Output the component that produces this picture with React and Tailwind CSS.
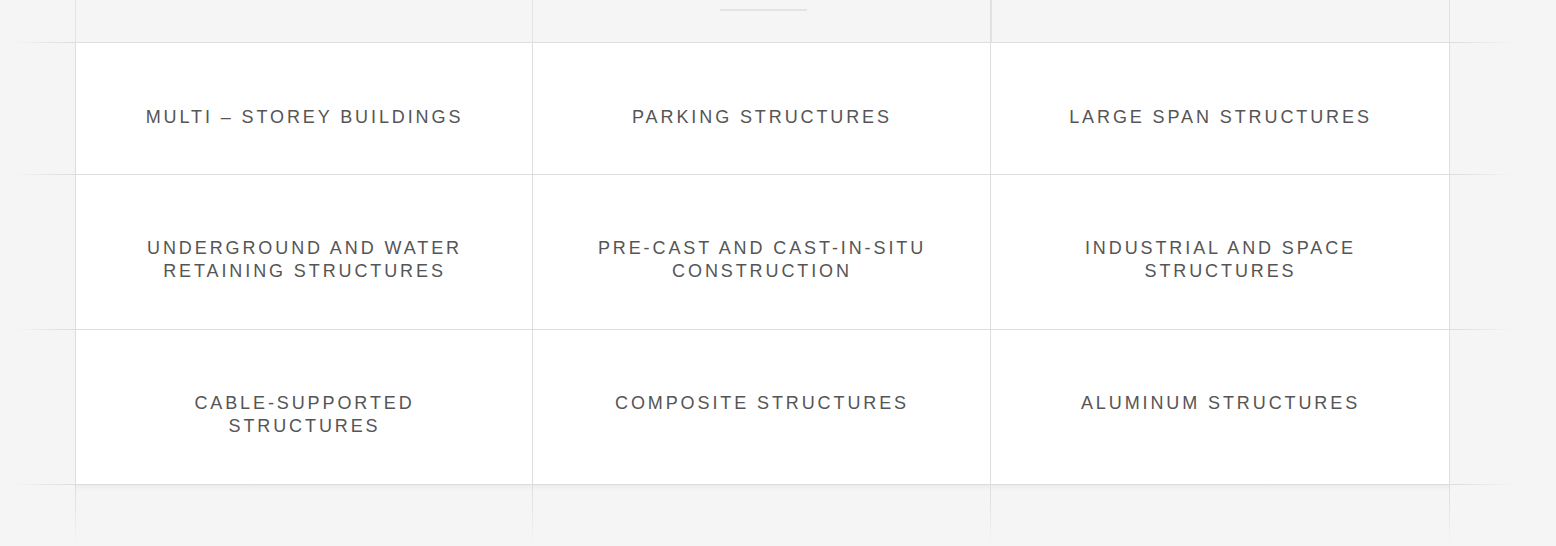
import React from "react";

const rows = [
  [["MULTI – STOREY BUILDINGS"], ["PARKING STRUCTURES"], ["LARGE SPAN STRUCTURES"]],
  [
    ["UNDERGROUND AND WATER", "RETAINING STRUCTURES"],
    ["PRE-CAST AND CAST-IN-SITU", "CONSTRUCTION"],
    ["INDUSTRIAL AND SPACE", "STRUCTURES"],
  ],
  [["CABLE-SUPPORTED", "STRUCTURES"], ["COMPOSITE STRUCTURES"], ["ALUMINUM STRUCTURES"]],
];

const widths = ["w-[457px]", "w-[458px]", "w-[459px]"];

function Cell({ lines, w, first }) {
  return (
    <div
      className={`${w} shrink-0 border-l border-t border-[#dedede] bg-white ${first ? "pt-[63px] pb-[45px]" : "pt-[62px] pb-[46px]"} text-center text-[18px] leading-[23px] tracking-[2.9px] text-[#555555]`}
      style={{ fontFamily: '"Liberation Sans", Arial, sans-serif' }}
    >
      {lines.map((l, i) => (
        <div key={i} className="pl-[1px]">{l}</div>
      ))}
    </div>
  );
}

export default function App() {
  return (
    <div className="w-full h-[546px] overflow-hidden bg-[#f5f5f5] flex flex-col">
      {/* top strip */}
      <div className="flex h-[42px] shrink-0">
        <div className="w-[75px] shrink-0" />
        <div className="w-[457px] shrink-0 border-l border-[#e2e2e2]" />
        <div className="w-[458px] shrink-0 border-l border-[#e2e2e2] flex justify-center pt-[9px]">
          <div className="ml-[3px] w-[87px] h-[2px] bg-[#e4e4e4]" />
        </div>
        <div className="w-[459px] shrink-0 border-l-2 border-[#e2e2e2]" />
        <div className="flex-1 border-l border-[#e2e2e2]" />
      </div>

      {rows.map((row, ri) => (
        <div key={ri} className="flex shrink-0">
          <div className="w-[75px] shrink-0 pl-3">
            <div className="h-px bg-linear-to-r from-transparent to-[#dcdcdc]" />
          </div>
          {row.map((lines, ci) => (
            <Cell key={ci} lines={lines} w={widths[ci]} first={ri === 0} />
          ))}
          <div className="flex-1 border-l border-[#dedede]">
            <div className="h-px w-[64px] bg-linear-to-r from-[#dcdcdc] to-transparent" />
          </div>
        </div>
      ))}

      {/* bottom strip */}
      <div className="flex flex-1">
        <div className="w-[75px] shrink-0 pl-3">
          <div className="h-px bg-linear-to-r from-transparent to-[#dcdcdc]" />
        </div>
        {widths.map((w, i) => (
          <div key={i} className={`${w} shrink-0 flex border-t border-[#dcdcdc]`}>
            <div className="w-px h-full bg-linear-to-b from-[#dcdcdc] to-transparent" />
            <div className="flex-1">
              <div className="h-[6px] bg-linear-to-b from-[#ececec] to-transparent" />
            </div>
          </div>
        ))}
        <div className="flex-1 flex">
          <div className="w-px h-full bg-linear-to-b from-[#dcdcdc] to-transparent" />
          <div className="flex-1">
            <div className="h-px w-[64px] bg-linear-to-r from-[#dcdcdc] to-transparent" />
          </div>
        </div>
      </div>
    </div>
  );
}
